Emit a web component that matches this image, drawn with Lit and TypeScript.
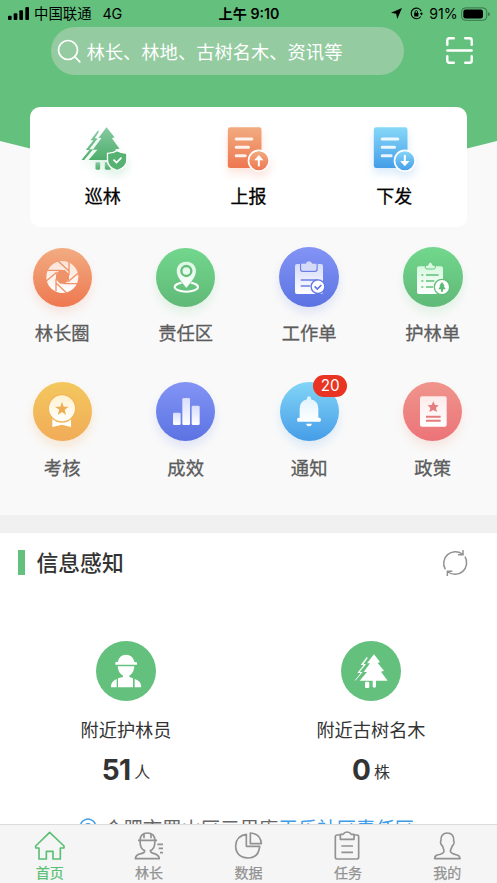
import { LitElement, html, svg, css, nothing } from "lit";
import { customElement, property } from "lit/decorators.js";

const gradient = (id: string, from: string, to: string) => svg`
  <linearGradient id=${id} x1="0" y1="0" x2="0" y2="1">
    <stop offset="0" stop-color=${from}></stop>
    <stop offset="1" stop-color=${to}></stop>
  </linearGradient>`;

const docBody = (id: string, from: string, to: string, arrow: unknown) => svg`
  <defs>${gradient(id, from, to)}</defs>
  <rect x="55" y="83" width="101" height="122" rx="7" fill="url(#${id})"></rect>
  <g stroke="#fff" stroke-opacity=".88" stroke-width="9" stroke-linecap="round">
    <path d="M80 118H127M80 143H117M80 168H107"></path>
  </g>
  <circle cx="148" cy="183" r="31" fill="url(#${id})" stroke="#fff" stroke-width="5"></circle>
  ${arrow}`;

const icons: Record<string, { box: string; art: unknown }> = {
  patrol: {
    box: "173.5 70 150 150",
    art: svg`
      <defs>${gradient("pt", "#86c9a0", "#4fae6c")}</defs>
      <g fill="url(#pt)">
        <path d="M259 83L283 113L275 116L298 147L285 149L303 181H205L232 150H218L244 115H235Z"></path>
        <path d="M234 92L236 97L224 115L232 117L207 149H219L192 181H184L208 151H197L220 122H211Z"></path>
        <rect x="226" y="188" width="14" height="22" rx="4"></rect>
        <path d="M254 188V206Q254 210 258 210H271V188Z"></path>
      </g>
      <path d="M291 153Q304 161 320 161V182Q320 203 291 213Q262 203 262 182V161Q278 161 291 153Z"
        fill="#56b272" stroke="#fff" stroke-width="4"></path>
      <path d="M280 180L289 189L304 174" fill="none" stroke="#fff" stroke-width="5"></path>`,
  },
  report: {
    box: "40.5 70 150 150",
    art: docBody("rp", "#f2ab80", "#ee7750", svg`
      <path d="M148 170V200" stroke="#fff" stroke-width="6"></path>
      <path d="M148 166L162 182H134Z" fill="#fff"></path>`),
  },
  issue: {
    box: "40.5 70 150 150",
    art: docBody("is", "#86d8f8", "#459de8", svg`
      <path d="M148 166V196" stroke="#fff" stroke-width="6"></path>
      <path d="M148 200L162 184H134Z" fill="#fff"></path>`),
  },
  aperture: {
    box: "96 37 180 180",
    art: svg`
      <defs>${gradient("ap", "#fbe3d6", "#ffffff")}</defs>
      <circle cx="187" cy="127" r="48" fill="url(#ap)"></circle>
      <path d="M179 106H195L207 119V135L195 147H180L168 134V119Z" fill="#f09269"></path>
      <path d="M142 107H184M175 80L206 108M207 82V122M235 115L203 142M232 147H190M199 174L169 146M168 170V132M139 139L171 112"
        stroke="#f09269" stroke-width="4"></path>`,
  },
  pin: {
    box: "466 37 180 180",
    art: svg`
      <defs>${gradient("pn", "#d9f8e2", "#ffffff")}</defs>
      <ellipse cx="557" cy="157" rx="35" ry="14" fill="none" stroke="#fff" stroke-width="6"></ellipse>
      <path d="M557 80C539 80 527 93 527 109C527 127 542 141 557 161C572 141 587 127 587 109C587 93 575 80 557 80Z"
        fill="url(#pn)" stroke="#66c07c" stroke-width="2"></path>
      <circle cx="557" cy="109" r="15" fill="none" stroke="#66bf7c" stroke-width="7"></circle>`,
  },
  work: {
    box: "96 36 180 180",
    art: svg`
      <defs>${gradient("wk", "#d5daf9", "#ffffff")}</defs>
      <rect x="144" y="87" width="84" height="90" rx="6" fill="url(#wk)"></rect>
      <path d="M161 86V103Q161 109 167 109H204Q210 109 210 103V86" fill="#d9defb" stroke="#6a7ee6" stroke-width="4"></path>
      <path d="M163 87H176Q178 79 186 79Q194 79 196 87H208V102Q208 106 204 106H167Q163 106 163 102Z" fill="#d5daf9"></path>
      <path d="M163 135H212M163 153H188" stroke="#6a7ee6" stroke-width="5" stroke-linecap="round"></path>
      <circle cx="213" cy="155" r="20.500" fill="#fff" stroke="#6279e4" stroke-width="4"></circle>
      <path d="M203 154L211 162L223 150" fill="none" stroke="#5f75e2" stroke-width="5"></path>`,
  },
  guard: {
    box: "462 36 180 180",
    art: svg`
      <defs>${gradient("gd", "#d6f8df", "#ffffff")}</defs>
      <rect x="504" y="94" width="78" height="83" rx="6" fill="url(#gd)"></rect>
      <path d="M529 91H536Q538 82 544 81Q550 82 552 91H559V97Q559 102 554 102H534Q529 102 529 97Z"
        fill="#d6f8df" stroke="#69c780" stroke-width="3"></path>
      <path d="M517 120H523M531 120H569M517 138H523M531 138H556M517 156H523M531 156H552" stroke="#62c079" stroke-width="5"></path>
      <circle cx="579" cy="156" r="23" fill="#fff" stroke="#62bc79" stroke-width="4"></circle>
      <path d="M579 141L587 152H584L590 163H582V170H576V163H568L574 152H571Z" fill="#5eb976"></path>`,
  },
  medal: {
    box: "96 49 180 180",
    art: svg`
      <defs>${gradient("md", "#fff2d0", "#ffffff")}</defs>
      <path d="M157 163L186 173L213 163V187L186 180L157 187Z" fill="#fff"></path>
      <circle cx="186" cy="131" r="41" fill="url(#md)" stroke="#f2b65b" stroke-width="4"></circle>
      <path d="M186 111L191 126H206L194 135L198 151L186 142L173 151L178 135L165 126H181Z" fill="#eead51"></path>`,
  },
  bars: {
    box: "466 49 180 180",
    art: svg`
      <defs>${gradient("br", "#d9ddfb", "#ffffff")}</defs>
      <g fill="url(#br)">
        <rect x="517" y="144" width="23" height="37" rx="4"></rect>
        <rect x="545" y="100" width="23" height="81" rx="4"></rect>
        <rect x="573" y="123" width="24" height="58" rx="4"></rect>
      </g>`,
  },
  bell: {
    box: "96 49 180 180",
    art: svg`
      <defs>${gradient("bl", "#dff3fd", "#ffffff")}</defs>
      <path d="M180 104V101Q180 95 186 95Q192 95 192 101V104Q214 109 214 132V159H218Q222 160 222 165Q222 171 218 171H154Q150 171 150 165Q150 160 154 159H158V132Q158 109 180 104Z"
        fill="url(#bl)"></path>
      <path d="M177 177H195Q193 185 186 185Q179 185 177 177Z" fill="#fff"></path>`,
  },
  policy: {
    box: "466 49 180 180",
    art: svg`
      <defs>${gradient("pl", "#fdebeb", "#ffffff")}</defs>
      <rect x="517" y="95" width="80" height="91" rx="6" fill="url(#pl)"></rect>
      <path d="M557 110L562 121L573 122L565 130L568 142L557 136L545 142L548 130L540 122L552 121Z" fill="#e57c7d"></path>
      <path d="M535 156H579M535 168H579" stroke="#e57c7d" stroke-width="6"></path>`,
  },
  ranger: {
    box: "108 31 180 180",
    art: svg`
      <path fill="#fff" d="M166 95Q172 94 174 93Q178 72 198 72Q218 72 223 93Q225 95 231 95V102H166Z"></path>
      <path fill="#fff" d="M173 107H223Q222 127 208 135V139L219 143V170H174V143L189 139V135Q174 127 173 107Z"></path>
      <path fill="#fff" d="M170 145V170H153Q152 152 170 145ZM224 145Q244 150 244 170H224Z"></path>`,
  },
  trees: {
    box: "843 31 180 180",
    art: svg`
      <g fill="#fff">
        <path d="M942 71L960 94L953 97L972 120L963 123L983 150H948V167Q948 171 943 171Q938 171 938 167V150H899L921 124H911L930 98H921Z"></path>
        <path d="M921 78L923 82L911 99L918 101L899 123L908 124L888 148L883 151L902 127H892L911 103H902Z"></path>
        <rect x="915" y="153" width="13" height="19" rx="4"></rect>
      </g>`,
  },
  home: {
    box: "99 70 100 100",
    art: svg`<path d="M149 80L192 121V127H181V160H159V137H139V160H117V127H107V121Z"></path>`,
  },
  chief: {
    box: "397 70 100 100",
    art: svg`
      <path d="M415 104H472M421 104Q422 82 443 82Q465 82 466 104Q466 131 452 135Q453 143 464 144Q478 148 479 159H407Q408 147 424 144Q435 142 435 135Q421 131 421 104M433 86V98M454 86V98M473 116H490M477 128H490M481 141H490"></path>`,
  },
  data: {
    box: "695 70 100 100",
    art: svg`<path d="M738 86V122H778Q775 157 743 157Q706 154 706 120Q708 90 738 86ZM750 82V114H783Q781 84 750 82Z"></path>`,
  },
  task: {
    box: "253 70 100 100",
    art: svg`<path d="M281 88H271Q266 88 266 93V155Q266 160 271 160H331Q336 160 336 155V93Q336 88 331 88H322M284 121H319M284 140H319M281 101V86H289Q293 79 301 79Q310 79 314 86H322V101Z"></path>`,
  },
  mine: {
    box: "551 70 100 100",
    art: svg`<path d="M600 82C587 82 580 91 581 104C578 109 580 117 585 120C588 128 590 132 590 137Q588 145 570 148Q562 150 562 159H638Q637 149 629 148Q611 144 609 137C609 132 613 127 615 120C620 117 621 109 619 104C620 91 613 82 600 82Z"></path>`,
  },
};

@customElement("forest-icon")
export class ForestIcon extends LitElement {
  @property() name = "";
  static styles = css`
    :host { display: block; }
    svg { display: block; width: 100%; height: 100%; overflow: visible; }
  `;
  render() {
    const icon = icons[this.name];
    return icon ? html`<svg viewBox=${icon.box}>${icon.art}</svg>` : nothing;
  }
}

@customElement("tab-icon")
export class TabIcon extends LitElement {
  @property() name = "";
  static styles = css`
    :host { display: block; width: 33.33px; height: 33.33px; }
    svg { display: block; width: 100%; height: 100%; fill: none; stroke: currentColor; stroke-width: 5; stroke-linejoin: round; }
  `;
  render() {
    const icon = icons[this.name];
    return icon ? html`<svg viewBox=${icon.box}>${icon.art}</svg>` : nothing;
  }
}

const actions = [
  { icon: "patrol", label: "巡林", tone: "leaf" },
  { icon: "report", label: "上报", tone: "coral" },
  { icon: "issue", label: "下发", tone: "sky" },
];

const shortcuts = [
  { icon: "aperture", label: "林长圈", tone: "orange" },
  { icon: "pin", label: "责任区", tone: "green" },
  { icon: "work", label: "工作单", tone: "indigo", large: true },
  { icon: "guard", label: "护林单", tone: "green", large: true },
  { icon: "medal", label: "考核", tone: "amber" },
  { icon: "bars", label: "成效", tone: "indigo" },
  { icon: "bell", label: "通知", tone: "blue", badge: 20 },
  { icon: "policy", label: "政策", tone: "rose" },
];

const stats = [
  { icon: "ranger", label: "附近护林员", value: 51, unit: "人" },
  { icon: "trees", label: "附近古树名木", value: 0, unit: "株" },
];

const tabs = [
  { icon: "home", label: "首页" },
  { icon: "chief", label: "林长" },
  { icon: "data", label: "数据" },
  { icon: "task", label: "任务" },
  { icon: "mine", label: "我的" },
];

@customElement("app-root")
export class AppRoot extends LitElement {
  static styles = css`
    :host {
      display: flex; flex-direction: column; width: 100%; height: 883px; overflow: hidden;
      background: #f9f9f9; color: #333;
      font-family: Inter, "Noto Sans CJK SC", sans-serif;
    }
    * { box-sizing: border-box; }
    .top {
      flex: none; height: 514.5px; display: flex; flex-direction: column;
      position: relative; isolation: isolate;
    }
    .top::before {
      content: ""; position: absolute; z-index: -1; inset: 0 0 auto; height: 203px;
      background: #64c07d; clip-path: polygon(0 0, 100% 0, 100% 141px, 50% 203px, 0 141px);
    }
    .status {
      height: 27px; padding: 0 7px 0 8px; display: grid; grid-template-columns: 1fr auto 1fr;
      align-items: center; color: #000; font-size: 14.400px; line-height: 26px;
    }
    .left, .right { display: flex; align-items: center; }
    .right { justify-content: flex-end; }
    .signal { width: 21px; height: 13px; margin-right: 5px; }
    .net { margin-left: 11px; letter-spacing: -.3px; }
    .clock { font-weight: 600; font-size: 14.200px; }
    .arrow { width: 11px; height: 11px; margin-right: 8px; }
    .lock { width: 13px; height: 13px; margin-right: 6px; }
    .pct { font-size: 14.200px; letter-spacing: -.1px; margin-right: 3.500px; }
    .battery { width: 29px; height: 14px; }
    .searchrow { display: flex; align-items: center; height: 48px; padding-left: 50.5px; }
    .search {
      width: 353px; height: 48px; border-radius: 24px; background: #94cba0; color: #fff;
      display: flex; align-items: center; padding-left: 6px; font-size: 18.300px;
    }
    .search svg { width: 24px; height: 24px; margin-right: 6px; }
    .search span { margin-top: -1px; }
    .scan { width: 27px; height: 27px; margin: -1px 0 0 42px; }
    .card {
      margin: 32px 30px 0; height: 120px; border-radius: 10px; background: #fff;
      display: grid; grid-template-columns: repeat(3, 1fr); flex: none;
    }
    .status, .searchrow { flex: none; }
    .action { display: flex; flex-direction: column; align-items: center; padding-top: 16.3px; }
    .action forest-icon { width: 50px; height: 50px; }
    .leaf { filter: drop-shadow(0 5px 4px #4fc07a33); }
    .coral { filter: drop-shadow(0 5px 4px #ee775033); }
    .sky { filter: drop-shadow(0 5px 4px #459de833); }
    .action span { color: #000; font-size: 18px; -webkit-text-stroke: .3px #000; line-height: 26px; margin-top: 10.700px; }
    .grid { display: grid; grid-template-columns: repeat(4, 123.5px); grid-auto-rows: 134.3px; margin: 20.200px 0 0 .4px; }
    .short { display: flex; flex-direction: column; align-items: center; }
    .disc { width: 59px; height: 59px; margin: .5px; border-radius: 50%; position: relative; }
    .disc forest-icon { width: 60px; height: 60px; margin: -.5px; }
    .disc.large { width: 60px; height: 60px; margin: 0; }
    .disc.large forest-icon { margin: 0; }
    .orange { background: linear-gradient(#f2ac82, #ee7850); box-shadow: 0 6px 10px #ee785026; }
    .green { background: linear-gradient(#72d78d, #60b977); box-shadow: 0 6px 10px #5cc87926; }
    .indigo { background: linear-gradient(#8394f5, #5b73e2); box-shadow: 0 6px 10px #5b73e226; }
    .amber { background: linear-gradient(#f3c85e, #f1ab58); box-shadow: 0 6px 10px #f1ab5838; }
    .blue { background: linear-gradient(#82d5f6, #469de8); box-shadow: 0 6px 10px #469de826; }
    .rose { background: linear-gradient(#ef958c, #ec7378); box-shadow: 0 6px 10px #ee785026; }
    .short span { color: #5c5c5c; font-size: 18.300px; -webkit-text-stroke: .3px #5c5c5c; line-height: 28px; margin-top: 12.200px; }
    .short .badge {
      position: absolute; left: 33.500px; top: -6.500px; width: 34px; height: 22px; border-radius: 11px;
      background: #ea3423; color: #fff; font-size: 15.300px; line-height: 22px; text-align: center; margin: 0; -webkit-text-stroke: 0;
    }
    .info { flex: 1; border-top: 18px solid #f0f0f0; background: #fff; min-height: 0; overflow: hidden; }
    .head { display: flex; align-items: center; height: 60px; padding: 0 28.500px 0 18px; }
    .mark { width: 6.500px; height: 25px; background: #64c07d; margin-right: 12px; }
    .head h2 { margin: 0; font-size: 21.800px; font-weight: 500; line-height: 30px; flex: 1; color: #333; }
    .refresh { width: 28px; height: 28px; }
    .stats { display: grid; grid-template-columns: 245px 245px; padding: 48.300px 0 0 3.500px; }
    .stat { display: flex; flex-direction: column; align-items: center; }
    .round { width: 60px; height: 60px; border-radius: 50%; background: #64c07d; }
    .name { font-size: 18.200px; line-height: 28px; margin-top: 15px; }
    .count { display: flex; align-items: baseline; gap: 4px; line-height: 34px; margin-top: 9px; font-size: 16px; }
    .count b { font-size: 28px; font-weight: 700; letter-spacing: -.7px; }
    .count span { position: relative; top: -1.500px; }
    .place { display: flex; align-items: center; padding-left: 79px; margin-top: 24px; font-size: 19.400px; line-height: 28px; color: #666; white-space: nowrap; }
    .place svg { width: 18px; height: 22px; margin-right: 7px; }
    .place em { font-style: normal; color: #3d9be9; }
    .tabs {
      flex: none; height: 59.500px; border-top: 1.500px solid #dcdcdc; background: #f5f5f5;
      display: grid; grid-template-columns: repeat(5, 1fr); color: #929292;
    }
    .tab { display: flex; flex-direction: column; align-items: center; padding-top: 4px; font-size: 14px; line-height: 20px; -webkit-text-stroke: .25px currentColor; }
    .tab.on { color: #5bbf76; }
    .tab span { margin-top: 1px; }
  `;

  render() {
    return html`
      <div class="top">
        <div class="status">
          <div class="left">
            <svg class="signal" viewBox="24 17 63 39">
              <rect x="24" y="43" width="11" height="13" rx="3"></rect>
              <rect x="41" y="36" width="11" height="20" rx="3"></rect>
              <rect x="58" y="27" width="11" height="29" rx="3"></rect>
              <rect x="76" y="17" width="11" height="39" rx="3"></rect>
            </svg>
            <span>中国联通</span><span class="net">4G</span>
          </div>
          <div class="clock">上午 9:10</div>
          <div class="right">
            <svg class="arrow" viewBox="0 0 11 11"><path d="M11 0L6.200 11L5.200 5.800L0 4.800Z"></path></svg>
            <svg class="lock" viewBox="0 0 13 13" fill="none" stroke="#000">
              <path d="M11.300 4.200A5.300 5.300 0 1 0 10.800 9.500M11.500 5.500V8" stroke-width="1.100"></path>
              <path d="M9.800 6.300H13L11.500 8.500Z" fill="#000" stroke="none"></path>
              <rect x="4.200" y="5.800" width="4.200" height="3.600" rx=".5" fill="#000" stroke="none"></rect>
              <path d="M5.100 6V4.800A1.200 1.200 0 0 1 7.500 4.800V6" stroke-width=".9"></path>
            </svg>
            <span class="pct">91%</span>
            <svg class="battery" viewBox="0 0 29 14">
              <rect x=".6" y=".9" width="25.200" height="12.400" rx="3.800" fill="none" stroke="#000" stroke-opacity=".4"></rect>
              <rect x="2.300" y="2.600" width="19.700" height="9" rx="2.300"></rect>
              <path d="M27.300 5V9.400Q28.700 8.700 28.700 7.200Q28.700 5.700 27.300 5Z" fill-opacity=".5"></path>
            </svg>
          </div>
        </div>
        <div class="searchrow">
          <div class="search">
            <svg viewBox="0 0 24 24" fill="none" stroke="#fff" stroke-width="1.700" stroke-linecap="round">
              <circle cx="11" cy="11" r="9.500"></circle><path d="M17.700 17.700L22.800 22.800"></path>
            </svg>
            <span>林长、林地、古树名木、资讯等</span>
          </div>
          <svg class="scan" viewBox="0 0 27 27" fill="none" stroke="#fff" stroke-width="2.400" stroke-linecap="round">
            <path d="M1.300 7.800V3.300Q1.300 1.300 3.300 1.300H7.800M19.200 1.300H23.700Q25.700 1.300 25.700 3.300V7.800M25.700 19.200V23.700Q25.700 25.700 23.700 25.700H19.200M7.800 25.700H3.300Q1.300 25.700 1.300 23.700V19.200M1.300 13.500H25.700"></path>
          </svg>
        </div>
        <div class="card">
          ${actions.map((a) => html`<div class="action">
            <forest-icon class=${a.tone} name=${a.icon}></forest-icon><span>${a.label}</span>
          </div>`)}
        </div>
        <div class="grid">
          ${shortcuts.map((s) => html`<div class="short">
            <div class="disc ${s.tone} ${s.large ? "large" : ""}">
              <forest-icon name=${s.icon}></forest-icon>
              ${s.badge ? html`<span class="badge">${s.badge}</span>` : nothing}
            </div>
            <span>${s.label}</span>
          </div>`)}
        </div>
      </div>
      <section class="info">
        <div class="head">
          <div class="mark"></div>
          <h2>信息感知</h2>
          <svg class="refresh" viewBox="1321 145 84 84" fill="none" stroke="#929292" stroke-width="4.500">
            <path d="M1334 206A35 35 0 0 1 1385 160M1387 148V162H1372M1393 168A35 35 0 0 1 1342 214M1340 226V212H1355"></path>
          </svg>
        </div>
        <div class="stats">
          ${stats.map((s) => html`<div class="stat">
            <forest-icon class="round" name=${s.icon}></forest-icon>
            <div class="name">${s.label}</div>
            <div class="count"><b>${s.value}</b><span>${s.unit}</span></div>
          </div>`)}
        </div>
        <div class="place">
          <svg viewBox="0 0 18 22" fill="none" stroke="#3d9be9" stroke-width="1.500">
            <path d="M9 1A7.600 7.600 0 0 0 1.400 8.800C1.400 13 6 16 9 20.500C12 16 16.600 13 16.600 8.800A7.600 7.600 0 0 0 9 1Z"></path>
            <circle cx="9" cy="8.500" r="2.800"></circle>
          </svg>
          <span>合肥市蜀山区三里庵<em>王乐社区责任区</em></span>
        </div>
      </section>
      <nav class="tabs">
        ${tabs.map((t, i) => html`<div class="tab ${i === 0 ? "on" : ""}">
          <tab-icon name=${t.icon}></tab-icon><span>${t.label}</span>
        </div>`)}
      </nav>
    `;
  }
}
